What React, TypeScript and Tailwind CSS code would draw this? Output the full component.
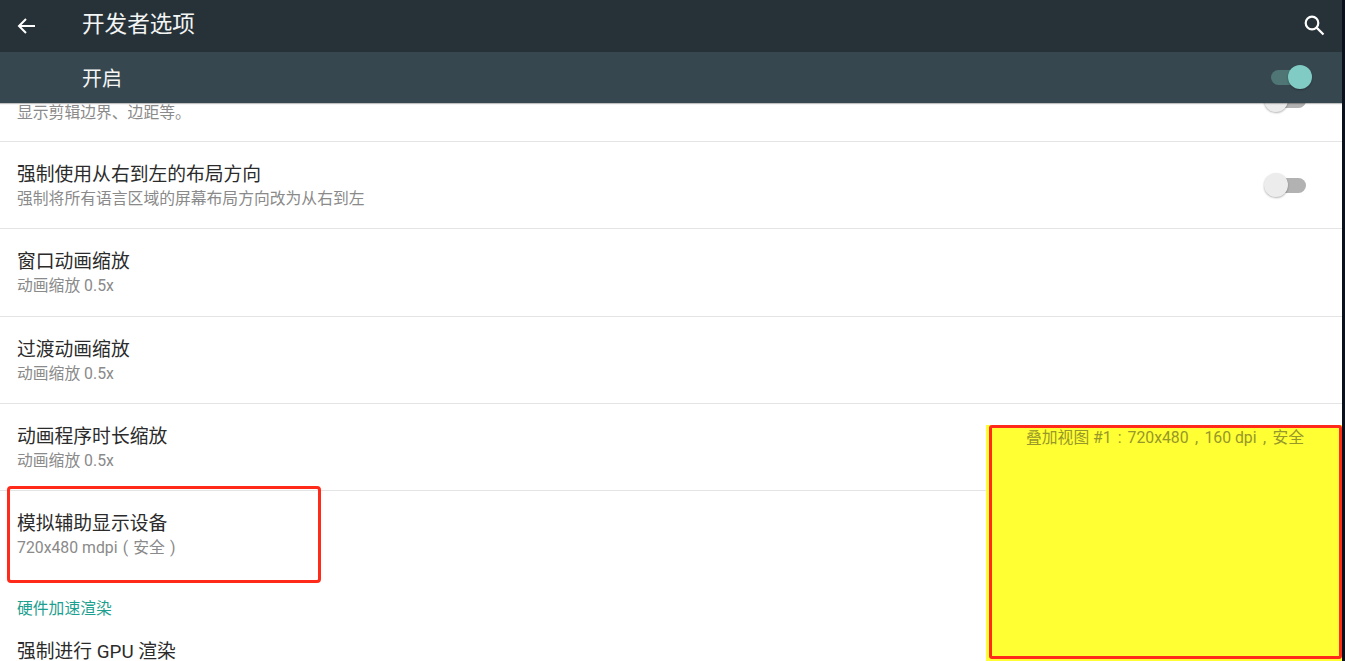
const font = "font-['Roboto','Noto_Sans_CJK_SC',sans-serif]";

function Cell({ c }: { c: string }) {
  return <span className="inline-block w-[1em] text-center">{c}</span>;
}

function Toggle({ on = false }: { on?: boolean }) {
  return (
    <div className="relative w-[42px] h-[24px] shrink-0">
      <div className={`absolute left-[2px] right-0 top-[5px] h-[15px] rounded-full ${on ? "bg-[#4f7674]" : "bg-[#b2b2b2]"}`} />
      <div
        className={`absolute top-0 w-[24px] h-[24px] rounded-full shadow-[0_1px_2px_rgba(0,0,0,0.3)] ${
          on ? "right-[-1px] bg-[#80cbc4]" : "left-0 bg-[#ececec]"
        }`}
      />
    </div>
  );
}

function Row({ title, sub, toggle }: { title: string; sub: string; toggle?: boolean }) {
  return (
    <div className="h-[87.25px] shrink-0 border-b border-[#e4e4e4] flex items-center justify-between pl-[17px] pr-[36px]">
      <div className="flex flex-col pt-[2px]">
        <div className="text-[18.8px] leading-[26px] text-[#2b2b2b] whitespace-nowrap">{title}</div>
        <div className="text-[15.8px] leading-[22px] text-[#8a8a8a] whitespace-nowrap">{sub}</div>
      </div>
      {toggle && <Toggle />}
    </div>
  );
}

export default function App() {
  return (
    <div className={`${font} relative w-[1345px] h-[661px] overflow-hidden bg-[#0a101c] flex`}>
      <div className="w-[1342px] h-full bg-white flex flex-col overflow-hidden relative">
        <header className="h-[52px] shrink-0 bg-[#263238] flex items-center justify-between text-white">
          <div className="flex items-center">
            <svg className="ml-[16px] w-[20px] h-[20px]" viewBox="0 0 20 20" fill="none" stroke="#fff" strokeWidth="2">
              <path d="M19 10H3M10 3l-7 7 7 7" />
            </svg>
            <span className="ml-[46px] text-[22.6px] leading-[28px] text-[#f4f5f5] mt-[-2px]">开发者选项</span>
          </div>
          <svg className="mr-[17px] w-[22px] h-[22px] mt-[-2px]" viewBox="0 0 22 22" fill="none" stroke="#fff" strokeWidth="2.2">
            <circle cx="9" cy="9" r="6.3" />
            <path d="M13.6 13.6L20.5 20.5" />
          </svg>
        </header>
        <div className="h-[51px] shrink-0 bg-[#37474f] flex items-center justify-between pl-[82px] pr-[31px] z-10 shadow-[0_1px_1px_rgba(0,0,0,0.25)]">
          <span className="text-[20px] text-[#f4f5f5] mt-[3px]">开启</span>
          <div className="mt-[-2px]">
            <Toggle on />
          </div>
        </div>
        <div className="flex-1 flex flex-col overflow-hidden">
          <div className="h-[39px] shrink-0 border-b border-[#e4e4e4] flex items-start justify-between pl-[17px] pr-[36px]">
            <div className="text-[15.8px] leading-[22px] text-[#8a8a8a] -mt-[1px]">显示剪辑边界、边距等。</div>
            <div className="-mt-[15px]">
              <Toggle />
            </div>
          </div>
          <Row title="强制使用从右到左的布局方向" sub="强制将所有语言区域的屏幕布局方向改为从右到左" toggle />
          <Row title="窗口动画缩放" sub="动画缩放 0.5x" />
          <Row title="过渡动画缩放" sub="动画缩放 0.5x" />
          <Row title="动画程序时长缩放" sub="动画缩放 0.5x" />
          <div className="h-[87px] shrink-0 flex items-center pl-[17px]">
            <div className="flex flex-col">
              <div className="text-[18.8px] leading-[26px] text-[#2b2b2b]">模拟辅助显示设备</div>
              <div className="text-[15.8px] leading-[22px] text-[#8a8a8a]">
                720x480 mdpi<Cell c="(" />安全<Cell c=")" />
              </div>
            </div>
          </div>
          <div className="pl-[17px] text-[15.8px] leading-[20px] text-[#1d9f90] mt-[21px]">硬件加速渲染</div>
          <div className="pl-[17px] text-[18.8px] leading-[26px] text-[#2b2b2b] mt-[20px] whitespace-nowrap">强制进行 GPU 渲染</div>
        </div>
      </div>
      {/* overlay window */}
      <div className="absolute left-[986px] top-[425px] w-[356px] h-[236px] bg-[#ffff33] text-center text-[15.8px] leading-[20px] pt-[3px] pl-[2px] text-[#97972a] whitespace-nowrap">
        叠加视图 #1<Cell c=":" />720x480<Cell c="," />160 dpi<Cell c="," />安全
      </div>
      {/* annotations */}
      <div className="absolute left-[989px] top-[425px] w-[353px] h-[234px] border-[3px] border-[#ff2a1a] rounded-[3px]" />
      <div className="absolute left-[7px] top-[486px] w-[314px] h-[97px] border-[3px] border-[#ff2a1a] rounded-[4px]" />
    </div>
  );
}
